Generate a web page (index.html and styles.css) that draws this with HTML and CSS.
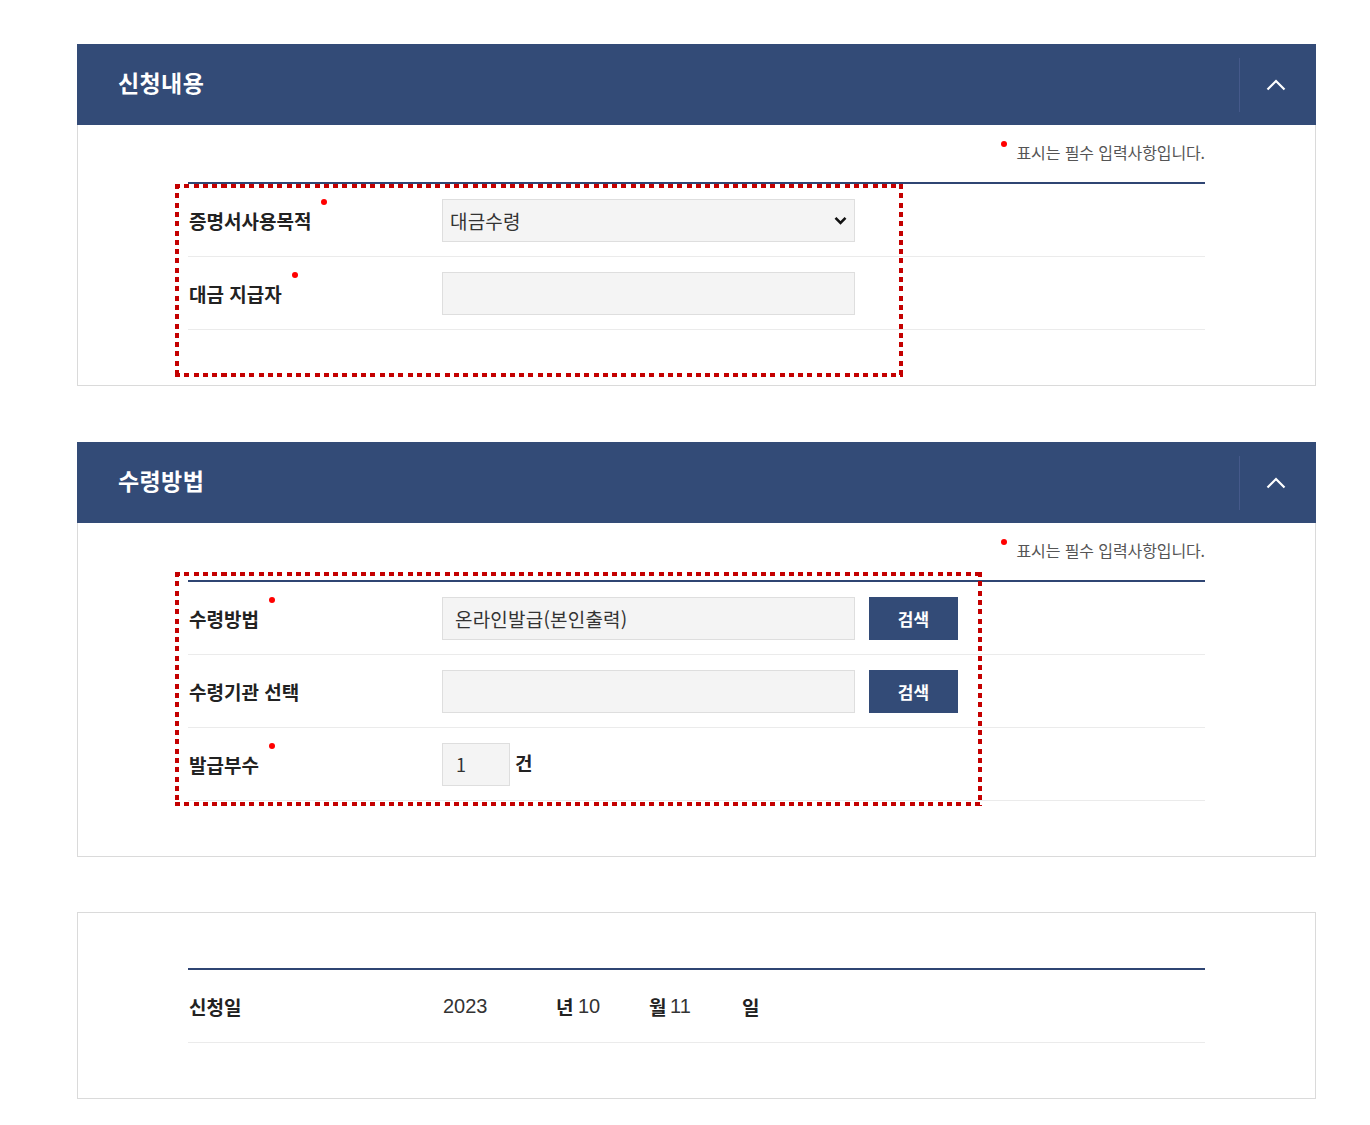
FILE: index.html
```html
<!DOCTYPE html>
<html lang="ko">
<head>
<meta charset="utf-8">
<title>신청서</title>
<link rel="stylesheet" href="styles.css">
</head>
<body>
<div class="page">

  <section class="panel">
    <div class="panel-head">
      <h2 class="panel-title">신청내용</h2>
      <button class="toggle" type="button" aria-label="접기">
        <svg width="20" height="12" viewBox="0 0 20 12"><path d="M1.5 10.5 L10 2 L18.5 10.5" fill="none" stroke="#fff" stroke-width="2.2"/></svg>
      </button>
    </div>
    <div class="panel-body">
      <p class="note">표시는 필수 입력사항입니다.</p>
      <div class="form-table">
        <div class="row">
          <div class="label"><span class="req">증명서사용목적</span></div>
          <div class="field">
            <div class="select">
              <span>대금수령</span>
              <svg class="caret" width="13" height="9" viewBox="0 0 13 9"><path d="M1.5 1.8 L6.5 6.8 L11.5 1.8" fill="none" stroke="#111" stroke-width="2.6"/></svg>
            </div>
          </div>
        </div>
        <div class="row">
          <div class="label"><span class="req">대금 지급자</span></div>
          <div class="field"><div class="input"></div></div>
        </div>
      </div>
      <div class="mark mark-1"></div>
    </div>
  </section>

  <section class="panel">
    <div class="panel-head">
      <h2 class="panel-title">수령방법</h2>
      <button class="toggle" type="button" aria-label="접기">
        <svg width="20" height="12" viewBox="0 0 20 12"><path d="M1.5 10.5 L10 2 L18.5 10.5" fill="none" stroke="#fff" stroke-width="2.2"/></svg>
      </button>
    </div>
    <div class="panel-body">
      <p class="note">표시는 필수 입력사항입니다.</p>
      <div class="form-table">
        <div class="row">
          <div class="label"><span class="req">수령방법</span></div>
          <div class="field">
            <div class="input text">온라인발급(본인출력)</div>
            <button class="btn" type="button">검색</button>
          </div>
        </div>
        <div class="row">
          <div class="label"><span>수령기관 선택</span></div>
          <div class="field">
            <div class="input"></div>
            <button class="btn" type="button">검색</button>
          </div>
        </div>
        <div class="row">
          <div class="label"><span class="req">발급부수</span></div>
          <div class="field">
            <div class="input small text">1</div>
            <span class="unit-count">건</span>
          </div>
        </div>
      </div>
      <div class="mark mark-2"></div>
    </div>
  </section>

  <section class="panel plain">
    <div class="panel-body boxed">
      <div class="form-table">
        <div class="row">
          <div class="label"><span>신청일</span></div>
          <div class="field date">
            <span class="num w-year">2023</span>
            <span class="unit w-y">년</span>
            <span class="num w-m">10</span>
            <span class="unit w-mo">월</span>
            <span class="num w-d">11</span>
            <span class="unit">일</span>
          </div>
        </div>
      </div>
    </div>
  </section>

</div>
</body>
</html>
```

FILE: styles.css
```css
* { box-sizing: border-box; }

body {
  margin: 0;
  background: #fff;
  font-family: "Noto Sans CJK KR", "Noto Sans", sans-serif;
  color: #222;
}

.page {
  width: 1239px;
  margin-left: 77px;
  padding-top: 44px;
}

.panel { margin-bottom: 56px; }
.panel + .panel + .panel { margin-top: -1px; }
.panel.plain { margin-bottom: 0; }

.panel-head {
  height: 81px;
  background: #334b77;
  display: flex;
  align-items: center;
}

.panel-title {
  flex: 1;
  margin: 0;
  padding: 0 0 5px 41px;
  color: #fff;
  font-size: 23px;
  font-weight: 700;
  letter-spacing: 0.4px;
  line-height: 1;
}

.toggle {
  width: 77px;
  height: 54px;
  border: 0;
  border-left: 1px solid #45598a;
  background: transparent;
  display: flex;
  align-items: center;
  justify-content: center;
  padding: 0 4px 0 0;
  cursor: pointer;
}

.panel-body {
  position: relative;
  border: 1px solid #dadada;
  border-top: 0;
  padding: 12px 110px 55px 110px;
}

.panel-body.boxed {
  border-top: 1px solid #dadada;
  padding-top: 55px;
}

.note {
  margin: 0 0 15px;
  height: 30px;
  line-height: 30px;
  text-align: right;
  font-size: 16px;
  letter-spacing: -0.1px;
  color: #555;
}

.note::before {
  content: "";
  display: inline-block;
  width: 6px;
  height: 6px;
  border-radius: 50%;
  background: #f00;
  vertical-align: top;
  margin: 4px 9px 0 0;
}

.form-table { border-top: 2px solid #2f4573; }

.row {
  display: flex;
  align-items: center;
  height: 73px;
  border-bottom: 1px solid #ebebeb;
}

.label {
  width: 254px;
  padding-left: 1px;
  font-size: 19px;
  font-weight: 700;
  letter-spacing: 0;
  color: #222;
}

.label span {
  position: relative;
  line-height: 26px;
  display: inline-block;
}

.label .req::after {
  content: "";
  position: absolute;
  right: -16px;
  top: -9px;
  width: 6px;
  height: 6px;
  border-radius: 50%;
  background: #f00;
}

.field {
  display: flex;
  align-items: center;
  flex: 1;
}

.select, .input {
  width: 413px;
  height: 43px;
  background: #f4f4f4;
  border: 1px solid #dedede;
  font-size: 19px;
  letter-spacing: 0.2px;
  color: #333;
}

.select {
  display: flex;
  align-items: center;
  justify-content: space-between;
  padding: 0 7px 0 7px;
}

.input.text {
  display: flex;
  align-items: center;
  padding-left: 12px;
}

.input.small {
  width: 68px;
  padding-left: 13px;
  font-size: 18px;
}

.btn {
  margin-left: 14px;
  width: 89px;
  height: 43px;
  border: 0;
  background: #334b77;
  color: #fff;
  font-family: inherit;
  font-size: 17px;
  font-weight: 700;
  letter-spacing: 0;
  cursor: pointer;
}

.unit-count {
  margin-left: 5px;
  margin-top: -4px;
  font-size: 19px;
  font-weight: 700;
  color: #222;
}

.date { padding-left: 1px; }

.num {
  font-family: "Liberation Sans", Arial, sans-serif;
  font-size: 20px;
  color: #333;
}

.unit {
  font-size: 19px;
  font-weight: 700;
  color: #222;
}

.w-year { width: 113px; }
.w-y { width: 22px; }
.w-m { width: 71px; }
.w-mo { width: 21px; }
.w-d { width: 72px; }

/* red dotted annotation boxes */
.mark {
  position: absolute;
  pointer-events: none;
  background:
    repeating-linear-gradient(90deg, #c40000 0 5px, transparent 5px 9.3px) top left / 100% 4px no-repeat,
    repeating-linear-gradient(90deg, #c40000 0 5px, transparent 5px 9.3px) bottom left / 100% 4px no-repeat,
    repeating-linear-gradient(180deg, #c40000 0 5px, transparent 5px 9.3px) top left / 4px 100% no-repeat,
    repeating-linear-gradient(180deg, #c40000 0 5px, transparent 5px 9.3px) top right / 4px 100% no-repeat;
}

.mark-1 { left: 97px; top: 59px; width: 728px; height: 193px; }
.mark-2 { left: 97px; top: 49px; width: 807px; height: 234px; }
```
